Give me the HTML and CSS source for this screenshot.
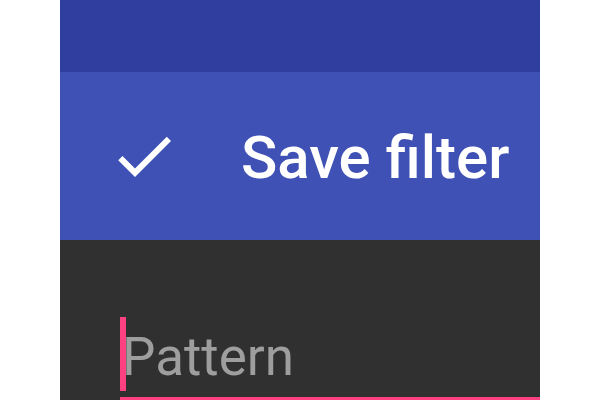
FILE: index.html
```html
<!DOCTYPE html>
<html>
<head>
<meta charset="utf-8">
<link rel="stylesheet" href="styles.css">
</head>
<body>
<div class="panel">
  <div class="topbar"></div>
  <div class="action">
    <svg class="check" viewBox="0 0 24 24" width="72" height="72"><path fill="#fff" d="M9 16.17L4.83 12l-1.42 1.41L9 19 21 7l-1.41-1.41z"/></svg>
    <span class="action-label">Save filter</span>
  </div>
  <div class="content">
    <div class="field">
      <span class="cursor"></span>
      <span class="placeholder">Pattern</span>
    </div>
  </div>
</div>
</body>
</html>
```
FILE: styles.css
```css
html, body {
  margin: 0;
  padding: 0;
  background: #ffffff;
  overflow: hidden;
}
.panel {
  width: 480px;
  margin-left: 60px;
  height: 400px;
  display: flex;
  flex-direction: column;
}
.topbar {
  height: 72px;
  background: #303f9f;
}
.action {
  height: 168px;
  background: #3f51b5;
  display: flex;
  align-items: center;
  padding-left: 48px;
  box-sizing: border-box;
}
.check {
  display: block;
  flex: none;
}
.action-label {
  margin-left: 61px;
  padding-top: 3px;
  font-family: Roboto, "Noto Sans", sans-serif;
  font-weight: 500;
  font-size: 60px;
  color: #ffffff;
  line-height: 1;
}
.content {
  flex: 1;
  background: #303030;
  padding-left: 60px;
  display: flex;
  flex-direction: column;
  justify-content: flex-end;
}
.field {
  height: 80px;
  border-bottom: 3px solid #ff4081;
  display: flex;
  align-items: flex-start;
}
.cursor {
  width: 6px;
  height: 74px;
  background: #ff4081;
  flex: none;
  position: relative;
  z-index: 1;
}
.placeholder {
  margin-left: -4px;
  margin-top: 3px;
  font-family: Roboto, "Noto Sans", sans-serif;
  font-size: 53px;
  line-height: 74px;
  color: #9e9e9e;
}
```
